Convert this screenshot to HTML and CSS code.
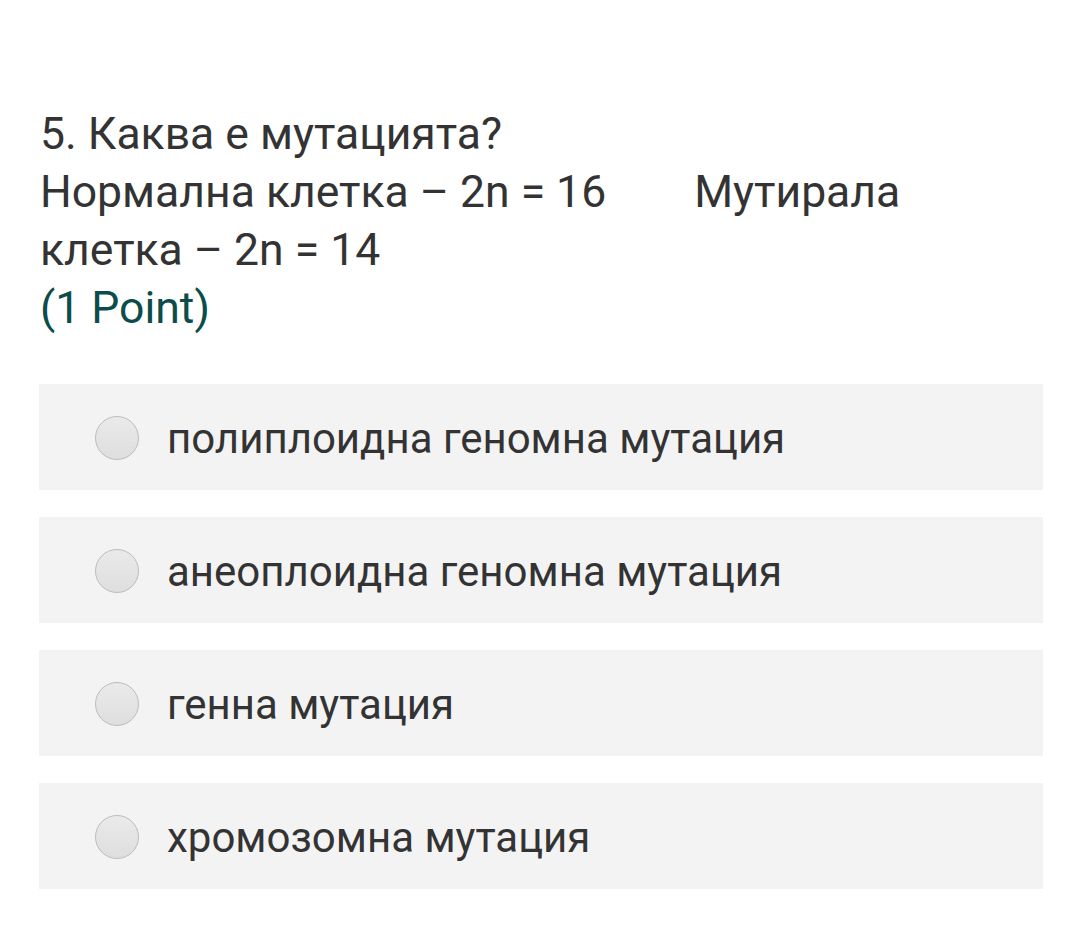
FILE: index.html
```html
<!DOCTYPE html>
<html lang="bg">
<head>
<meta charset="utf-8">
<link rel="stylesheet" href="styles.css">
</head>
<body>
<div class="page">
  <div class="question">
    <div class="title">5. Каква е мутацията?</div>
    <div class="title">Нормална клетка – 2n = 16<span class="gap"></span>Мутирала<br>клетка – 2n = 14</div>
    <div class="points">(1 Point)</div>
  </div>
  <div class="options">
    <label class="option"><span class="radio"></span><span class="label">полиплоидна геномна мутация</span></label>
    <label class="option"><span class="radio"></span><span class="label">анеоплоидна геномна мутация</span></label>
    <label class="option"><span class="radio"></span><span class="label">генна мутация</span></label>
    <label class="option"><span class="radio"></span><span class="label">хромозомна мутация</span></label>
  </div>
</div>
</body>
</html>
```
FILE: styles.css
```css
html, body {
  margin: 0;
  padding: 0;
  background: #ffffff;
}
body {
  font-family: Roboto, "Noto Sans", sans-serif;
  color: #333333;
}
.page {
  padding: 105px 37px 0 39px;
}
.question {
  padding-left: 1px;
}
.title {
  font-size: 44.5px;
  line-height: 58px;
  color: #333333;
}
.gap {
  display: inline-block;
  width: 88px;
}
.points {
  font-size: 44.5px;
  line-height: 58px;
  color: #0b4d4a;
}
.options {
  margin-top: 47px;
  display: flex;
  flex-direction: column;
  gap: 27px;
}
.option {
  display: flex;
  align-items: center;
  height: 106px;
  background: #f3f3f3;
  padding-left: 56px;
  padding-top: 2px;
  box-sizing: border-box;
}
.radio {
  width: 42px;
  height: 42px;
  border-radius: 50%;
  border: 1px solid #bcbcbc;
  background: linear-gradient(#eaeaea, #dedede);
  box-sizing: content-box;
  flex: none;
}
.label {
  margin-left: 28px;
  font-size: 42px;
  color: #333333;
}
```
